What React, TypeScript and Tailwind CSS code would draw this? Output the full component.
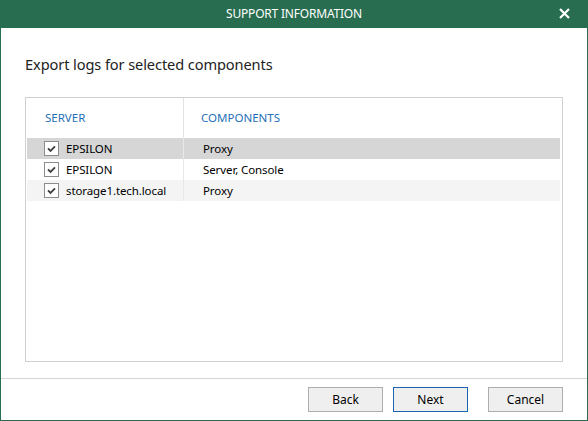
import React from 'react';

interface Row {
  server: string;
  components: string;
  selected?: boolean;
  alt?: boolean;
}

const rows: Row[] = [
  { server: 'EPSILON', components: 'Proxy', selected: true },
  { server: 'EPSILON', components: 'Server, Console' },
  { server: 'storage1.tech.local', components: 'Proxy', alt: true },
];

function CheckBox() {
  return (
    <div className="w-[15px] h-[15px] border border-[#8c8c8c] bg-white flex items-center justify-center">
      <svg width="11" height="11" viewBox="0 0 11 11">
        <path d="M2 5.3 L4.5 7.8 L9 3.3" fill="none" stroke="#404040" strokeWidth="1.9" />
      </svg>
    </div>
  );
}

function Button({ label, primary }: { label: string; primary?: boolean }) {
  return (
    <button
      className={`w-[75px] h-[25px] bg-[#efefef] text-[12px] text-black flex items-center justify-center border ${
        primary ? 'border-[#1c64b0]' : 'border-[#adadad]'
      }`}
    >
      {label}
    </button>
  );
}

export default function App() {
  return (
    <div
      className="w-[588px] h-[421px] bg-[#296d50] flex flex-col"
      style={{ fontFamily: '"Noto Sans", "Liberation Sans", sans-serif' }}
    >
      {/* Title bar */}
      <div className="relative h-[28px] flex items-center justify-center text-white text-[12px] tracking-[-0.2px]">
        SUPPORT INFORMATION
        <svg className="absolute right-[18px] top-[8px]" width="11" height="11" viewBox="0 0 11 11">
          <path d="M1 1 L10 10 M10 1 L1 10" stroke="#fff" strokeWidth="2.2" />
        </svg>
      </div>

      {/* Body */}
      <div className="flex-1 mx-[1px] mb-[1px] bg-white flex flex-col">
        <div className="flex-1 px-[24px] pt-[26px]">
          <div className="h-[20px] leading-[20px] text-[14.6px] text-[#222] tracking-[-0.1px]">
            Export logs for selected components
          </div>
          <div className="mt-[23px] h-[265px] border border-[#d0d0d0] pl-[1px] pr-[2px]">
            <div className="grid grid-cols-[157px_1fr] h-[40px] items-center text-[11.5px] text-[#1f70b8]">
              <div className="h-full border-r border-[#e3e3e3] flex items-center pl-[18px]">SERVER</div>
              <div className="pl-[17px]">COMPONENTS</div>
            </div>
            {rows.map((row, i) => (
              <div
                key={i}
                className={`grid grid-cols-[157px_1fr] h-[21px] text-[11.5px] text-black tracking-[-0.1px] ${
                  row.selected ? 'bg-[#d6d6d6]' : row.alt ? 'bg-[#f4f4f4]' : 'bg-white'
                }`}
              >
                <div className="border-r border-[#e8e8e8] flex items-center pl-[17px] gap-[7px]">
                  <CheckBox />
                  <span>{row.server}</span>
                </div>
                <div className="flex items-center pl-[19px]">{row.components}</div>
              </div>
            ))}
          </div>
        </div>

        {/* Footer */}
        <div className="border-t border-[#d5d5d5] pt-[8px] pb-[8px] pr-[24px] flex justify-end">
          <Button label="Back" />
          <div className="ml-[10px]">
            <Button label="Next" primary />
          </div>
          <div className="ml-[20px]">
            <Button label="Cancel" />
          </div>
        </div>
      </div>
    </div>
  );
}
